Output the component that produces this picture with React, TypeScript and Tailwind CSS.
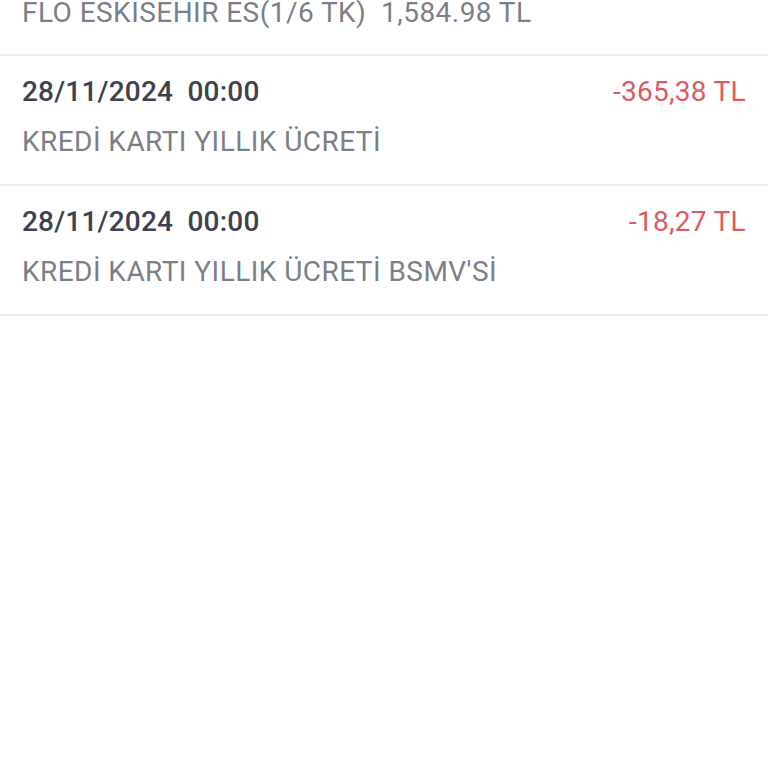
import React from "react";

type Tx = { date: string; desc: string; amount: string };

const rows: Tx[] = [
  { date: "28/11/2024  00:00", desc: "KREDİ KARTI YILLIK ÜCRETİ", amount: "-365,38 TL" },
  { date: "28/11/2024  00:00", desc: "KREDİ KARTI YILLIK ÜCRETİ BSMV'Sİ", amount: "-18,27 TL" },
];

function Row({ tx, className = "pb-[26px]" }: { tx: Tx; className?: string }) {
  return (
    <div className={`border-b-2 border-[#ececee] pl-[22px] pr-[22px] pt-[19px] ${className}`}>
      <div className="flex items-center justify-between">
        <span className="whitespace-pre text-[28px] leading-[33px] font-medium tracking-[0.2px] text-[#3e414e]">{tx.date}</span>
        <span className="text-[28px] leading-[33px] tracking-[0.3px] text-[#dc5a60]">{tx.amount}</span>
      </div>
      <div className="mt-[17px] whitespace-pre text-[28px] leading-[33px] tracking-[0.45px] text-[#7c7f88]">{tx.desc}</div>
    </div>
  );
}

export default function App() {
  return (
    <div
      className="h-[768px] w-[768px] overflow-hidden bg-white"
      style={{ fontFamily: "Roboto, 'Noto Sans', sans-serif" }}
    >
      <div className="-mt-[73px]">
        <Row
          className="pb-[25px]"
          tx={{ date: "26/11/2024  00:00", desc: "FLO ESKISEHIR ES(1/6 TK)  1,584.98 TL", amount: "-264,16 TL" }}
        />
        {rows.map((r, i) => (
          <Row key={i} tx={r} />
        ))}
      </div>
    </div>
  );
}
